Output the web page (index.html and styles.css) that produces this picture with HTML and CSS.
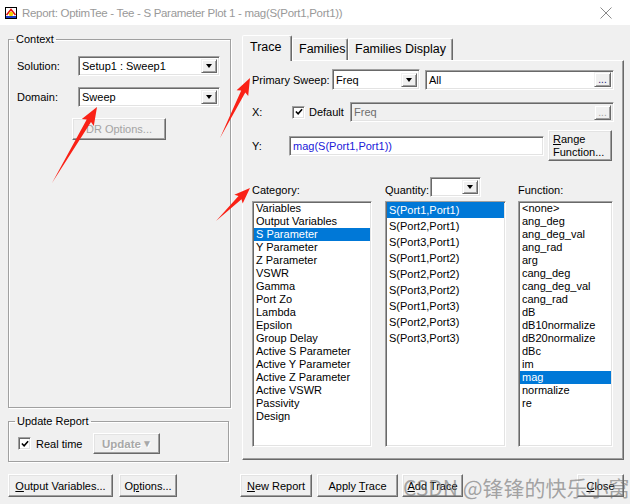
FILE: index.html
```html
<!DOCTYPE html>
<html lang="en">
<head>
    <meta charset="UTF-8">
    <title>Report: OptimTee - Tee - S Parameter Plot 1</title>
    <link rel="stylesheet" href="styles.css">
</head>
<body>

    <div class="titlebar">
        <svg class="app-icon" viewBox="0 0 12 12">
            <rect x="0.5" y="0.5" width="11" height="11" fill="#fff" stroke="#000"/>
            <path d="M1.5 8 L6 2.5 L10.5 8" fill="none" stroke="#e01010" stroke-width="1.6"/>
            <circle cx="6" cy="7" r="2.2" fill="#f3d000"/>
            <rect x="1" y="9" width="10" height="2" fill="#1c3cc8"/>
        </svg>
        <span class="title">Report: OptimTee - Tee - S Parameter Plot 1 - mag(S(Port1,Port1))</span>
        <svg class="close-x" viewBox="0 0 12 12">
            <path d="M0.5 0.5 L11.5 11.5 M11.5 0.5 L0.5 11.5" stroke="#8a8a8a" stroke-width="1"/>
        </svg>
    </div>

    <div class="main">
        <div class="left">
            <fieldset class="group context">
                <legend>Context</legend>
                <div class="row">
                    <span class="row-label">Solution:</span>
                    <div class="combo w-context">
                        <span class="combo-text">Setup1 : Sweep1</span>
                        <span class="drop-btn"></span>
                    </div>
                </div>
                <div class="row">
                    <span class="row-label">Domain:</span>
                    <div class="combo w-context">
                        <span class="combo-text">Sweep</span>
                        <span class="drop-btn"></span>
                    </div>
                </div>
                <button class="btn disabled dr-btn">DR Options...</button>
            </fieldset>

            <fieldset class="group update">
                <legend>Update Report</legend>
                <div class="row">
                    <span class="check"><svg viewBox="0 0 9 9"><path d="M1 4 L3.5 6.5 L8 1.5" fill="none" stroke="#000" stroke-width="1.8"/></svg></span>
                    <span class="check-label">Real time</span>
                    <button class="btn update-btn">Update<span class="mini-arrow">&#9660;</span></button>
                </div>
            </fieldset>

            <div class="actions">
                <button class="btn w-outvars"><span><u>O</u>utput Variables...</span></button>
                <button class="btn w-options"><span>O<u>p</u>tions...</span></button>
            </div>
        </div>

        <div class="right">
            <div class="tabs">
                <div class="tab active">Trace</div>
                <div class="tab">Families</div>
                <div class="tab">Families Display</div>
            </div>
            <div class="panel">
                <div class="row">
                    <span class="label-sweep">Primary Sweep:</span>
                    <div class="combo w-freq">
                        <span class="combo-text">Freq</span>
                        <span class="drop-btn"></span>
                    </div>
                    <div class="combo w-all">
                        <span class="combo-text">All</span>
                        <span class="dots-btn">...</span>
                    </div>
                </div>

                <div class="row x-row">
                    <span class="label-x">X:</span>
                    <span class="check"><svg viewBox="0 0 9 9"><path d="M1 4 L3.5 6.5 L8 1.5" fill="none" stroke="#000" stroke-width="1.8"/></svg></span>
                    <span class="check-label">Default</span>
                    <div class="combo readonly w-xfield">
                        <span class="combo-text">Freq</span>
                        <span class="dots-btn off">...</span>
                    </div>
                </div>

                <div class="row y-row">
                    <span class="label-y">Y:</span>
                    <div class="combo w-yfield">
                        <span class="combo-text expr">mag(S(Port1,Port1))</span>
                    </div>
                    <button class="btn range-btn"><span><u>R</u>ange<br>Function...</span></button>
                </div>

                <div class="lists">
                    <div class="list-head">Category:</div>
                    <div class="list-head">
                        <span>Quantity:</span>
                        <div class="combo w-qty">
                            <span class="combo-text"></span>
                            <span class="drop-btn"></span>
                        </div>
                    </div>
                    <div class="list-head">Function:</div>

                    <div class="listbox w-cat">
                        <div class="item">Variables</div>
                        <div class="item">Output Variables</div>
                        <div class="item selected">S Parameter</div>
                        <div class="item">Y Parameter</div>
                        <div class="item">Z Parameter</div>
                        <div class="item">VSWR</div>
                        <div class="item">Gamma</div>
                        <div class="item">Port Zo</div>
                        <div class="item">Lambda</div>
                        <div class="item">Epsilon</div>
                        <div class="item">Group Delay</div>
                        <div class="item">Active S Parameter</div>
                        <div class="item">Active Y Parameter</div>
                        <div class="item">Active Z Parameter</div>
                        <div class="item">Active VSWR</div>
                        <div class="item">Passivity</div>
                        <div class="item">Design</div>
                    </div>
                    <div class="listbox w-qlist tall">
                        <div class="item selected">S(Port1,Port1)</div>
                        <div class="item">S(Port2,Port1)</div>
                        <div class="item">S(Port3,Port1)</div>
                        <div class="item">S(Port1,Port2)</div>
                        <div class="item">S(Port2,Port2)</div>
                        <div class="item">S(Port3,Port2)</div>
                        <div class="item">S(Port1,Port3)</div>
                        <div class="item">S(Port2,Port3)</div>
                        <div class="item">S(Port3,Port3)</div>
                    </div>
                    <div class="listbox w-func">
                        <div class="item">&lt;none&gt;</div>
                        <div class="item">ang_deg</div>
                        <div class="item">ang_deg_val</div>
                        <div class="item">ang_rad</div>
                        <div class="item">arg</div>
                        <div class="item">cang_deg</div>
                        <div class="item">cang_deg_val</div>
                        <div class="item">cang_rad</div>
                        <div class="item">dB</div>
                        <div class="item">dB10normalize</div>
                        <div class="item">dB20normalize</div>
                        <div class="item">dBc</div>
                        <div class="item">im</div>
                        <div class="item selected">mag</div>
                        <div class="item">normalize</div>
                        <div class="item">re</div>
                    </div>
                </div>
            </div>

            <div class="actions">
                <button class="btn w-new"><span><u>N</u>ew Report</span></button>
                <button class="btn w-apply"><span>Apply <u>T</u>race</span></button>
                <button class="btn w-add"><span><u>A</u>dd Trace</span></button>
                <button class="btn w-close"><span><u>C</u>lose</span></button>
            </div>
        </div>
    </div>

    <div class="watermark">CSDN @锋锋的快乐小窝</div>

    <!-- red annotation arrows drawn over the dialog -->
    <svg class="marks" viewBox="0 0 630 504">
        <polygon points="52,183 91,122.1 93.8,126.1 97,107 81.8,118.9 86.7,119.5"/>
        <polygon points="220,138 245.3,92.4 248.2,96.1 250,78 236.6,90.3 241.2,90.4"/>
        <polygon points="216,221 241.5,199.3 242.7,203.4 250,188 234.3,194.8 238.5,196.1"/>
    </svg>

</body>
</html>
```

FILE: styles.css
```css
* {
    box-sizing: border-box;
}
body {
    margin: 0;
    width: 630px;
    height: 504px;
    overflow: hidden;
    position: relative;
    background: #f0f0f0;
    font-family: "Liberation Sans", Arial, sans-serif;
    font-size: 11px;
    color: #000;
}

/* title bar */
.titlebar {
    height: 25px;
    background: #fff;
    display: flex;
    align-items: center;
}
.app-icon {
    width: 12px;
    height: 12px;
    margin-left: 5px;
}
.title {
    margin-left: 5px;
    font-size: 11.5px;
    letter-spacing: -0.3px;
    color: #999;
}
.close-x {
    width: 12px;
    height: 12px;
    margin-left: auto;
    margin-right: 18px;
}

.main {
    display: flex;
    gap: 9px;
    padding-left: 8px;
}
.left {
    width: 223px;
    padding-top: 8px;
}
.right {
    width: 384px;
    padding-top: 10px;
}
.row {
    display: flex;
    align-items: center;
}

/* group boxes */
.group {
    margin: 0;
    min-width: 0;
    border: 1px solid #a0a0a0;
    box-shadow: inset 1px 1px 0 #fff, 1px 1px 0 #fff;
    padding: 0 0 0 8px;
}
.group legend {
    margin-left: -3px;
    padding: 0 2px;
    line-height: 13px;
}
.context {
    height: 375px;
    padding-top: 10px;
}
.context .row + .row {
    margin-top: 11px;
}
.row-label {
    width: 61px;
}
.update {
    margin-top: 7px;
    height: 47px;
    width: 221px;
    padding-left: 9px;
    padding-top: 5px;
}

/* sunken fields */
.combo {
    height: 20px;
    background: #fff;
    border: 1px solid;
    border-color: #a0a0a0 #fff #fff #a0a0a0;
    box-shadow: inset 1px 1px 0 #696969, inset -1px -1px 0 #e3e3e3;
    display: flex;
    align-items: center;
    padding: 2px;
}
.combo.readonly {
    background: #f0f0f0;
    color: #6d6d6d;
}
.combo-text {
    flex: 1;
    padding-left: 1px;
    white-space: nowrap;
}
.combo-text.expr {
    color: #2020d8;
}
.drop-btn,
.dots-btn {
    width: 16px;
    height: 14px;
    background: #f0f0f0;
    border: 1px solid;
    border-color: #f0f0f0 #696969 #696969 #f0f0f0;
    box-shadow: inset 1px 1px 0 #fff, inset -1px -1px 0 #a0a0a0;
    display: flex;
    align-items: center;
    justify-content: center;
}
.drop-btn::after {
    content: "";
    border-left: 3.5px solid transparent;
    border-right: 3.5px solid transparent;
    border-top: 4px solid #000;
}
.dots-btn {
    width: 17px;
    height: 15px;
    font-size: 10px;
    color: #1c1c70;
    line-height: 9px;
}
.dots-btn.off {
    color: #a0a0a0;
}

.w-context { width: 142px; }
.w-freq { width: 88px; height: 21px; }
.w-all { width: 189px; margin-left: 5px; }
.w-xfield { width: 264px; margin-left: auto; }
.w-yfield { width: 255px; }
.w-qty { width: 51px; margin-left: 1px; }

/* raised buttons */
.btn {
    font: inherit;
    color: #000;
    background: #f0f0f0;
    border: 1px solid;
    border-color: #fff #696969 #696969 #fff;
    box-shadow: inset -1px -1px 0 #a0a0a0, inset 1px 1px 0 #e3e3e3;
    padding: 0;
    height: 23px;
    display: flex;
    align-items: center;
    justify-content: center;
}
.btn.disabled {
    color: #a3a3a3;
}
.dr-btn {
    width: 94px;
    height: 22px;
    margin-left: 55px;
    margin-top: 11px;
}
.update-btn {
    width: 67px;
    height: 21px;
    margin-left: 11px;
    font-size: 11.5px;
    font-weight: bold;
    color: #a8a8a8;
    text-shadow: 1px 1px 0 #fff;
}
.mini-arrow {
    font-size: 10px;
    margin-left: 1px;
}
.range-btn {
    width: 64px;
    height: 31px;
    margin-left: 4px;
    justify-content: flex-start;
    text-align: left;
    padding-left: 4px;
    line-height: 13px;
}

/* check boxes */
.check {
    width: 13px;
    height: 13px;
    background: #fff;
    border: 1px solid;
    border-color: #a0a0a0 #fff #fff #a0a0a0;
    box-shadow: inset 1px 1px 0 #696969, inset -1px -1px 0 #e3e3e3;
    display: flex;
    align-items: center;
    justify-content: center;
}
.check svg {
    width: 8px;
    height: 8px;
}
.check-label {
    margin-left: 5px;
}

/* bottom button rows */
.actions {
    display: flex;
    margin-top: 12px;
    gap: 6px;
}
.right .actions {
    margin-top: 14px;
    gap: 0;
}
.w-outvars { width: 105px; }
.w-options { width: 58px; }
.w-new { width: 72px; }
.w-apply { width: 81px; margin-left: 5px; }
.w-add { width: 61px; margin-left: 4px; }
.w-close { width: 47px; margin-left: auto; }

/* tab control */
.tabs {
    display: flex;
    align-items: flex-end;
    height: 25px;
    margin-left: 2px;
    position: relative;
    z-index: 1;
}
.tab {
    height: 22px;
    padding: 0 6px;
    font-size: 12.5px;
    line-height: 21px;
    border: 1px solid;
    border-bottom: none;
    border-color: #fff #696969 transparent #fff;
    box-shadow: inset -1px 0 0 #a0a0a0;
    border-radius: 2px 2px 0 0;
}
.tab.active {
    height: 26px;
    width: 50px;
    margin-bottom: -1px;
    background: #f0f0f0;
    line-height: 22px;
    padding: 0 0 0 7px;
}
.tab:nth-child(2) { width: 56px; }
.tab:nth-child(3) { width: 105px; }

.panel {
    height: 400px;
    margin-left: 2px;
    border: 1px solid;
    border-color: #fff #696969 #696969 #fff;
    box-shadow: inset -1px -1px 0 #a0a0a0;
    padding: 8px 9px 0 9px;
}
.label-sweep { width: 80px; }
.x-row {
    margin-top: 12px;
}
.label-x { width: 40px; }
.x-row .check-label { margin-left: 4px; }
.y-row {
    margin-top: 8px;
}
.label-y { width: 37px; }

/* list boxes */
.lists {
    display: grid;
    grid-template-columns: 133px 133px 95px;
    grid-template-rows: 20px 246px;
    row-gap: 4px;
    margin-top: 16px;
}
.list-head {
    display: flex;
    align-items: flex-end;
    line-height: 13px;
}
.list-head .combo {
    align-self: stretch;
}
.listbox {
    background: #fff;
    border: 1px solid;
    border-color: #a0a0a0 #fff #fff #a0a0a0;
    box-shadow: inset 1px 1px 0 #696969, inset -1px -1px 0 #e3e3e3;
    padding: 0 1px 1px 1px;
    overflow: hidden;
}
.item {
    height: 13px;
    line-height: 13px;
    padding-left: 2px;
    white-space: nowrap;
}
.tall .item {
    height: 16px;
    line-height: 16px;
}
.item.selected {
    background: #0078d7;
    color: #fff;
}
.w-cat { width: 120px; }
.w-qlist { width: 121px; }
.w-func { width: 95px; }

/* overlays */
.watermark {
    position: absolute;
    left: 403px;
    top: 472px;
    font-family: "Noto Sans CJK SC", "Liberation Sans", sans-serif;
    font-size: 21px;
    color: rgba(110, 110, 110, 0.6);
    white-space: nowrap;
}
.marks {
    position: absolute;
    left: 0;
    top: 0;
    width: 630px;
    height: 504px;
    fill: #fa2116;
    pointer-events: none;
}
```
